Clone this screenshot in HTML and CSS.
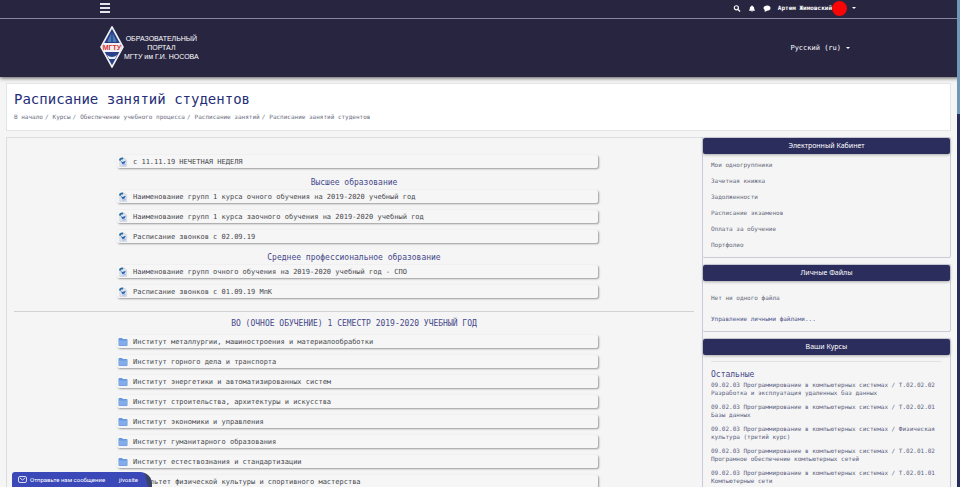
FILE: index.html
```html
<!DOCTYPE html>
<html lang="ru">
<head>
<meta charset="utf-8">
<meta name="viewport" content="width=device-width, initial-scale=1">
<title>Расписание занятий студентов</title>
<link rel="stylesheet" href="styles.css">
</head>
<body>
<svg class="defs" aria-hidden="true">
  <symbol id="doc" viewBox="0 0 20 22">
    <path d="M3 3h11l4 4v14H3z" fill="#dfe3ef" stroke="#b9c0d2"/>
    <path d="M1 7C2 2 7 0 11 2L9 6C7 5 5 6 5 9z" fill="#2a6f9f"/>
    <path d="M5 9l4 2 7-3-2 6-5 2z" fill="#2467b4"/>
    <path d="M8 17l8-2v3l-7 1z" fill="#a8b8dc"/>
  </symbol>
  <symbol id="folder" viewBox="0 0 20 18">
    <path d="M1 3q0-2 2-2h5l2 2h7q2 0 2 2v10q0 2-2 2H3q-2 0-2-2z" fill="#6797dc"/>
    <path d="M2 6h15l1-2v11q0 1-1 1H3q-1 0-1-1z" fill="#83ade9"/>
  </symbol>
</svg>
<header class="site">
  <div class="topbar">
    <button class="burger" type="button" aria-label="Меню"><span></span><span></span><span></span></button>
    <nav class="tools" aria-label="Пользователь">
      <button type="button" aria-label="Поиск"><svg viewBox="0 0 16 16"><circle cx="6.5" cy="6.5" r="4.7" fill="none" stroke="#fff" stroke-width="2.6"/><path d="M10 10l5 5" stroke="#fff" stroke-width="3"/></svg></button>
      <button type="button" aria-label="Уведомления"><svg viewBox="0 0 16 16"><path d="M8 0l1 2c3 1 4 3 4 6 0 2 1 3 2 5H1c1-2 2-3 2-5 0-3 1-5 4-6zM6 14h4q-2 3-4 0z" fill="#fff"/></svg></button>
      <button type="button" aria-label="Сообщения"><svg viewBox="0 0 16 16"><path d="M9 1c4 0 7 2 7 6s-3 6-8 6c-2 2-4 2-6 2l1-3C1 10 0 8 0 7c0-4 4-6 9-6z" fill="#fff"/></svg></button>
      <button class="user" type="button">Артем Жимовский<span class="avatar"></span><span class="caret"></span></button>
    </nav>
  </div>
  <div class="brandbar">
    <a class="brand" href="#">
      <svg class="emblem" viewBox="0 0 24 42" aria-hidden="true">
        <path d="M12 1L23 21 12 41 1 21z" fill="#29418a" stroke="#f2f2f4" stroke-width="1.6"/>
        <path d="M12 6l5 10H7z" fill="#4c7bb8"/>
        <path d="M12 5v14M7 15v4M17 15v4" stroke="#20346e"/>
        <path d="M4 17h16l2 4-2 5H4l-2-5z" fill="#f4eff0"/>
        <path d="M7 29q5 4 10 0l-2 4H9z" fill="#e9edf4"/>
        <text class="emblem-text" x="12" y="24" text-anchor="middle">МГТУ</text>
      </svg>
      <span class="brand-name">ОБРАЗОВАТЕЛЬНЫЙ<br>ПОРТАЛ<br>МГТУ им Г.И. НОСОВА</span>
    </a>
    <button class="lang" type="button">Русский (ru)<span class="caret"></span></button>
  </div>
</header>
<div class="page">
  <section class="heading">
    <h1>Расписание занятий студентов</h1>
    <nav class="crumbs" aria-label="Навигация">
      <a href="#">В начало</a><a href="#">Курсы</a><a href="#">Обеспечение учебного процесса</a><a href="#">Расписание занятий</a><a href="#">Расписание занятий студентов</a>
    </nav>
  </section>
  <div class="columns">
    <main>
      <ul class="list">
        <li><a href="#"><svg><use href="#doc"/></svg>с 11.11.19 НЕЧЕТНАЯ НЕДЕЛЯ</a></li>
      </ul>
      <h2>Высшее образование</h2>
      <ul class="list">
        <li><a href="#"><svg><use href="#doc"/></svg>Наименование групп 1 курса очного обучения на 2019-2020 учебный год</a></li>
        <li><a href="#"><svg><use href="#doc"/></svg>Наименование групп 1 курса заочного обучения на 2019-2020 учебный год</a></li>
        <li><a href="#"><svg><use href="#doc"/></svg>Расписание звонков с 02.09.19</a></li>
      </ul>
      <h2>Среднее профессиональное образование</h2>
      <ul class="list">
        <li><a href="#"><svg><use href="#doc"/></svg>Наименование групп очного обучения на 2019-2020 учебный год - СПО</a></li>
        <li><a href="#"><svg><use href="#doc"/></svg>Расписание звонков с 01.09.19 МпК</a></li>
      </ul>
      <hr>
      <h2>ВО (ОЧНОЕ ОБУЧЕНИЕ) 1 СЕМЕСТР 2019-2020 УЧЕБНЫЙ ГОД</h2>
      <ul class="list">
        <li><a href="#"><svg><use href="#folder"/></svg>Институт металлургии, машиностроения и материалообработки</a></li>
        <li><a href="#"><svg><use href="#folder"/></svg>Институт горного дела и транспорта</a></li>
        <li><a href="#"><svg><use href="#folder"/></svg>Институт энергетики и автоматизированных систем</a></li>
        <li><a href="#"><svg><use href="#folder"/></svg>Институт строительства, архитектуры и искусства</a></li>
        <li><a href="#"><svg><use href="#folder"/></svg>Институт экономики и управления</a></li>
        <li><a href="#"><svg><use href="#folder"/></svg>Институт гуманитарного образования</a></li>
        <li><a href="#"><svg><use href="#folder"/></svg>Институт естествознания и стандартизации</a></li>
        <li><a href="#"><svg><use href="#folder"/></svg>Факультет физической культуры и спортивного мастерства</a></li>
      </ul>
    </main>
    <aside>
      <section class="card">
        <h3>Электронный Кабинет</h3>
        <ul class="links">
          <li><a href="#">Мои одногруппники</a></li>
          <li><a href="#">Зачетная книжка</a></li>
          <li><a href="#">Задолженности</a></li>
          <li><a href="#">Расписание экзаменов</a></li>
          <li><a href="#">Оплата за обучение</a></li>
          <li><a href="#">Портфолио</a></li>
        </ul>
      </section>
      <section class="card">
        <h3>Личные Файлы</h3>
        <div class="files">
          <p>Нет ни одного файла</p>
          <a href="#">Управление личными файлами...</a>
        </div>
      </section>
      <section class="card">
        <h3>Ваши Курсы</h3>
        <div class="courses">
          <h4>Остальные</h4>
          <a href="#">09.02.03 Программирование в компьютерных системах / Т.02.02.02 Разработка и эксплуатация удаленных баз данных</a>
          <a href="#">09.02.03 Программирование в компьютерных системах / Т.02.02.01 Базы данных</a>
          <a href="#">09.02.03 Программирование в компьютерных системах / Физическая культура (третий курс)</a>
          <a href="#">09.02.03 Программирование в компьютерных системах / Т.02.01.02 Програмное обеспечение компьютерных сетей</a>
          <a href="#">09.02.03 Программирование в компьютерных системах / Т.02.01.01 Компьютерные сети</a>
        </div>
      </section>
    </aside>
  </div>
</div>
<div class="track"><div class="thumb"></div></div>
<button class="chat" type="button">
  <svg viewBox="0 0 18 14" aria-hidden="true"><rect x="1" y="1" width="16" height="12" rx="3" fill="none" stroke="#fff" stroke-width="1.6"/><path d="M4 4l5 4 5-4" fill="none" stroke="#fff" stroke-width="1.6"/></svg>
  <span>Отправьте нам сообщение</span><span class="vendor">jivosite</span>
</button>
</body>
</html>
```
FILE: styles.css
```css
* { box-sizing: border-box; }
html { scrollbar-width: none; }
body {
  margin: 0;
  background: #f5f5f5;
  color: #45464c;
  font: 6px/8px "DejaVu Sans Mono", monospace;
}
a { color: inherit; text-decoration: none; }
button { padding: 0; border: 0; background: none; color: inherit; font: inherit; }
ul { margin: 0; padding: 0; list-style: none; }
h1, h2, h3, h4, p { margin: 0; font-weight: 400; }
.defs { position: absolute; width: 0; height: 0; }

.site { background: #282541; color: #fff; box-shadow: 0 1px 4px #555; }
.topbar, .brandbar { display: flex; align-items: center; justify-content: space-between; padding: 0 104px 0 100px; }
.topbar { height: 19px; padding-bottom: 2px; border-bottom: 1px solid #8987a0; }
.burger { display: grid; gap: 2px; width: 10px; }
.burger span { height: 2px; background: #e4e4ea; }
.tools { display: flex; align-items: center; gap: 7px; }
.tools svg { display: block; width: 8px; height: 7px; }
.user { display: flex; align-items: center; font-weight: 700; }
.avatar { width: 15px; height: 15px; margin-right: 5px; border-radius: 50%; background: #f90505; }
.caret { border: 2px solid transparent; border-top-color: #fff; border-bottom: 0; }
.brandbar { height: 58px; padding-right: 110px; }
.brand { display: flex; align-items: center; gap: 0; padding-bottom: 2px; }
.emblem { width: 24px; height: 42px; }
.emblem-text { fill: #d93636; font: 700 7px "Liberation Sans", sans-serif; }
.brand-name { font: 7px/9px "Liberation Sans", sans-serif; text-align: center; }
.lang { display: flex; align-items: center; gap: 5px; font-size: 7px; }

.page { padding: 6px 9px 0 6px; }
.heading { height: 48px; padding: 7px; border: 1px solid #e2e5e8; background: #fff; }
h1 { color: #252d78; font-size: 14px; line-height: 16px; }
.crumbs { display: flex; margin-top: 6px; color: #6b6e80; }
.crumbs a:not(:last-child)::after { content: "/"; margin: 0 4px 0 2px; }
.columns { display: grid; grid-template-columns: 1fr 249px; margin-top: 6px; }
main { padding: 17px 8px 0 7px; border: solid #dcdde0; border-width: 1px 0 0 1px; }
.list { display: grid; gap: 7px; margin: 0 96px 0 103px; }
.list a {
  display: flex;
  align-items: center;
  gap: 5px;
  height: 13px;
  padding-left: 1px;
  border-radius: 2px;
  box-shadow: 1px 1px 2px #999;
  background: #f6f6f6;
  font-size: 7px;
}
.list svg { width: 10px; height: 10px; }
h2 { margin: 9px 0 0; padding-bottom: 1px; color: #45498b; font-size: 8px; line-height: 12px; text-align: center; }
hr { margin: 13px 0 0; border: 0; border-top: 1px solid #d2d3d5; }
hr + h2 { margin-top: 6px; padding-bottom: 5px; }

aside { display: grid; gap: 6px; align-content: start; border-left: 1px solid #c9ccd6; }
.card { border: 1px solid #c9ccd6; border-left: 0; border-radius: 2px; color: #666a7b; }
h3 {
  border-radius: 2px;
  background: #2b2d5c;
  box-shadow: 0 1px 3px #aaa;
  color: #fff;
  font: 7px/16px "Noto Sans", sans-serif;
  text-align: center;
}
.links { display: grid; gap: 8px; padding: 7px 8px 8px; }
.files { display: grid; gap: 13px; padding: 13px 8px 8px; }
.files a { color: #50568c; }
.courses { margin: 6px 8px 0; padding-top: 7px; border-top: 1px solid #e2e2e4; }
.courses h4 { color: #45498b; font-size: 8px; line-height: 11px; }
.courses a { display: block; padding: 1px 0 5px; color: #5a5f80; }

.track { position: fixed; top: 0; right: 0; bottom: 0; width: 3px; background: #292b5b; }
.thumb { height: 114px; background: #7097b8; }
.chat {
  position: fixed;
  left: 12px;
  bottom: 0;
  display: flex;
  align-items: center;
  gap: 3px;
  width: 140px;
  height: 15px;
  padding: 0 6px;
  border-radius: 3px 12px 0 0;
  background: linear-gradient(75deg, #3b49b8 94%, #3c4264 95%);
  color: #fff;
  font: 6px/8px Roboto, sans-serif;
}
.chat svg { width: 9px; height: 7px; }
.vendor { margin: 0 8px 0 auto; }
```
